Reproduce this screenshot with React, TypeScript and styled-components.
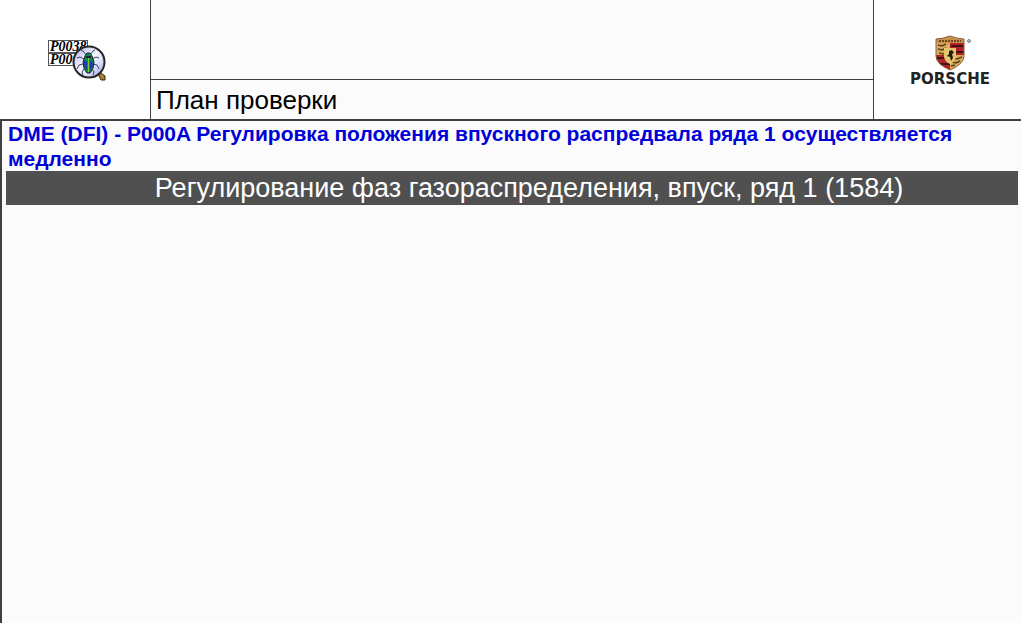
import React from "react";
import styled, { createGlobalStyle } from "styled-components";

const GlobalStyle = createGlobalStyle`
  *, *::before, *::after { box-sizing: border-box; }
  body { margin: 0; background: #fbfbfb; font-family: "Liberation Sans", Arial, sans-serif; color: #000; }
`;

const Page = styled.div`
  min-height: 100vh;
  display: flex;
  flex-direction: column;
`;

const Header = styled.header`
  display: grid;
  grid-template-columns: 150px 1fr 147px;
  min-height: 121px;
  border-bottom: 2px solid #404043;
`;

const LogoCell = styled.div`
  background: #fff;
  padding: 4px 0 0 4px;
  display: flex;
  flex-direction: column;
  align-items: center;
  justify-content: center;
`;

const TitleColumn = styled.div`
  display: grid;
  grid-template-rows: 1fr 40px;
  border-left: 1px solid #404043;
  border-right: 1px solid #404043;
`;

const Title = styled.h1`
  margin: 0;
  padding: 2px 5px 0;
  border-top: 1px solid #404043;
  font-size: 26px;
  line-height: 37px;
  font-weight: 400;
`;

const Content = styled.main`
  flex: 1;
  border-left: 2px solid #404043;
  padding: 0 3px 0 4px;
`;

const FaultHeading = styled.h2`
  margin: 0;
  padding: 0 2px;
  color: #0000d8;
  font-size: 21px;
  line-height: 25px;
  font-weight: 700;
`;

const SectionBar = styled.div`
  min-height: 34px;
  padding-left: 34px;
  background: #505050;
  color: #fff;
  font-size: 27px;
  line-height: 34px;
  text-align: center;
`;

const FaultIcon = () => (
  <svg width="60" height="46" viewBox="0 0 60 46" aria-label="P0038">
    <defs>
      <clipPath id="labels"><path d="M1 0h40v27H1z" /></clipPath>
      <linearGradient id="lens" x1="0" y1="0" x2="1" y2="1">
        <stop offset="0" stopColor="#a9abf0" />
        <stop offset=".45" stopColor="#f4f6ff" />
        <stop offset=".65" stopColor="#e4e6fe" />
        <stop offset="1" stopColor="#8e94e4" />
      </linearGradient>
    </defs>
    <g fill="#fff" stroke="#555" shapeRendering="crispEdges">
      <path d="M1.5 1.5h39v12h-39z" />
      <path d="M1.5 14.5h39v12h-39z" />
    </g>
    <g clipPath="url(#labels)" fontFamily="Liberation Serif, serif" fontSize="14" fontWeight="700" fontStyle="italic">
      <text x="3" y="12">P0038</text>
      <text x="3" y="25">P00</text>
    </g>
    <path d="M51 35l3-1 4 3v4h-4z" fill="#a8802b" stroke="#332914" />
    <circle cx="42" cy="23" r="15.5" fill="url(#lens)" stroke="#252525" strokeWidth="2" />
    <g fill="none" stroke="#3c4157">
      <path d="M39 16l-3-4-2-1M43 16l3-4 2-1M37 20l-4-2-3 1M36 25l-4 1-2 4M37 30l-2 3 1 3M45 20l4-2 3 1M46 25l4 1 2 4M45 30l2 3-1 3" />
    </g>
    <path d="M38 17l2-3h3l2 3 2 6q0 7-4 11h-3q-4-4-4-11z" fill="#0b8a56" stroke="#12262c" />
    <path d="M37 21l3 2v8l-3-4zM45 21l-2 2v8l3-4z" fill="#203bb2" />
    <path d="M39 18h5" stroke="#12262c" strokeWidth="2" />
    <path d="M41.5 19v14" stroke="#7fca35" />
  </svg>
);

const Brand = () => (
  <svg width="98" height="54" viewBox="0 0 98 54" aria-label="Porsche">
    <defs>
      <clipPath id="shield">
        <path d="M35 4q6 0 14-3 8 3 14 3v17q0 8-14 14-14-6-14-14z" />
      </clipPath>
    </defs>
    <g clipPath="url(#shield)">
      <path d="M34 0h30v37H34z" fill="#d8ac59" />
      <path d="M49 8h15v12H49zM34 20h15v16H34z" fill="#b3202a" />
      <path d="M50 11h14M50 17h14M34 23h15M34 29h15" stroke="#3b1715" strokeWidth="2" />
      <path d="M37 10l4 1 4-2M37 14l4 1 4-2M38 18l4 1 3-2M52 23l4 1 5-2M51 27l4 1 4-2M50 31l4-1" stroke="#58411e" strokeWidth="1.5" fill="none" />
      <path d="M35 1h28v7H35z" fill="#c8904d" />
      <path d="M38 6h22" stroke="#70451d" strokeDasharray="2 1" strokeWidth="2" />
      <path d="M43 13h12v9q-1 5-6 7-5-2-6-7z" fill="#e8c66c" />
      <path d="M48 16l3-1 2 3-2 1 1 4-2 3-1-4-3-1 2-2z" fill="#211b14" />
    </g>
    <path d="M35 4q6 0 14-3 8 3 14 3v17q0 8-14 14-14-6-14-14z" fill="none" stroke="#8b613e" />
    <circle cx="68" cy="6" r="1.5" fill="#bbb" stroke="#888" />
    <text x="49" y="49" textAnchor="middle" fontFamily="DejaVu Sans, sans-serif" fontWeight="700" fontSize="15" fill="#222">PORSCHE</text>
  </svg>
);

export default function App() {
  return (
    <>
      <GlobalStyle />
      <Page>
        <Header>
          <LogoCell><FaultIcon /></LogoCell>
          <TitleColumn>
            <div />
            <Title>План проверки</Title>
          </TitleColumn>
          <LogoCell><Brand /></LogoCell>
        </Header>
        <Content>
          <FaultHeading>
            DME (DFI) - P000A Регулировка положения впускного распредвала ряда 1 осуществляется медленно
          </FaultHeading>
          <SectionBar>Регулирование фаз газораспределения, впуск, ряд 1 (1584)</SectionBar>
        </Content>
      </Page>
    </>
  );
}
